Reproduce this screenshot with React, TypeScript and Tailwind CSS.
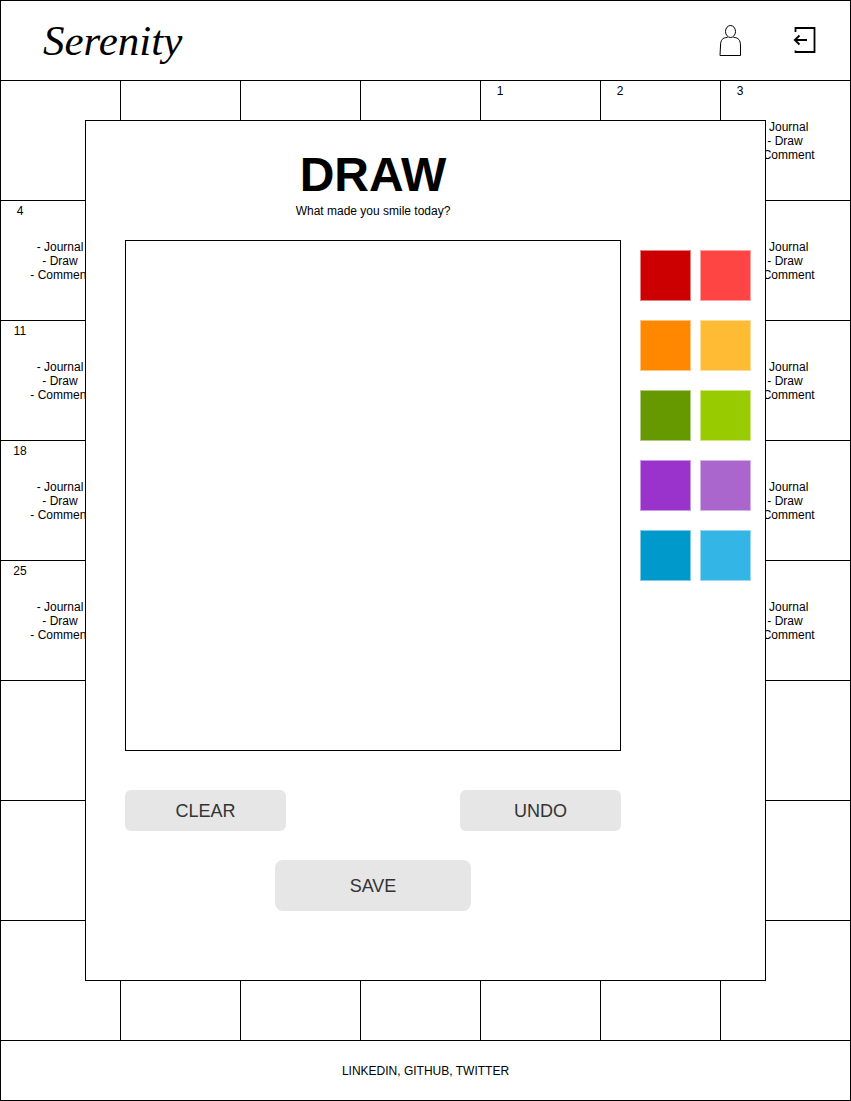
import React from "react";

type Day = { day?: number; entries?: boolean };

const weeks: Day[][] = [
  [{}, {}, {}, {}, { day: 1 }, { day: 2 }, { day: 3, entries: true }],
  ...[4, 11, 18, 25].map((day): Day[] => [{ day, entries: true }, {}, {}, {}, {}, {}, { entries: true }]),
  ...[0, 1, 2].map((): Day[] => [{}, {}, {}, {}, {}, {}, {}]),
];

const swatches = [
  { name: "Dark red", color: "bg-[#cc0000]" },
  { name: "Light red", color: "bg-[#ff4444]" },
  { name: "Dark orange", color: "bg-[#ff8800]" },
  { name: "Light orange", color: "bg-[#ffbb33]" },
  { name: "Dark green", color: "bg-[#669900]" },
  { name: "Light green", color: "bg-[#99cc00]" },
  { name: "Dark purple", color: "bg-[#9933cc]" },
  { name: "Light purple", color: "bg-[#aa66cc]" },
  { name: "Dark blue", color: "bg-[#0099cc]" },
  { name: "Light blue", color: "bg-[#33b5e5]" },
];

function Header() {
  return (
    <header className="flex h-20 items-center justify-between border-b border-black pr-8 pl-[42px]">
      <a href="#" className="font-['Liberation_Serif',serif] text-[43px] leading-none italic">
        Serenity
      </a>
      <nav className="flex items-center gap-[50px]">
        <button type="button" aria-label="Profile">
          <svg width="24" height="32" viewBox="0 0 24 32" fill="none" stroke="black" strokeWidth="1" className="block">
            <ellipse cx="12.5" cy="6.5" rx="5" ry="6" />
            <path d="M9.5 12.5C4.500 12.500 2.5 15 2.5 21L2 30.5H22.5L22.5 21C22.5 15 20.5 12.500 15.5 12.5" />
          </svg>
        </button>
        <button type="button" aria-label="Log out">
          <svg width="26" height="30" viewBox="0 0 26 30" fill="none" stroke="black" strokeWidth="1.8" className="block">
            <path d="M3.500 6V2H22.500V26H3.500V24.500M3 14H15M7.500 9.500L2.800 14L7.500 18.500" />
          </svg>
        </button>
      </nav>
    </header>
  );
}

function DayCell({ day, entries }: Day) {
  return (
    <div className="h-[120px] border-r border-b border-black nth-[7n]:border-r-0">
      <div className="flex h-5 w-[38px] items-center justify-center">{day}</div>
      {entries && (
        <ul className="flex h-20 flex-col items-center justify-center pr-px">
          <li>- Journal</li>
          <li>- Draw</li>
          <li>- Comment</li>
        </ul>
      )}
    </div>
  );
}

function ActionButton({ label, size }: { label: string; size: string }) {
  return (
    <button type="button" className={`bg-[#e6e6e6] text-lg text-[#333333] ${size}`}>
      {label}
    </button>
  );
}

function DrawDialog() {
  return (
    <section
      role="dialog"
      aria-labelledby="draw-title"
      className="z-10 col-start-1 row-start-1 mx-[84px] mt-[39px] mb-[60px] flex gap-[19px] border border-black bg-white pr-[14px] pl-[39px]"
    >
      <div className="flex flex-1 flex-col pt-[29px]">
        <h1 id="draw-title" className="text-center text-5xl leading-[50px] font-bold">
          DRAW
        </h1>
        <p className="text-center leading-[22px]">What made you smile today?</p>
        <canvas aria-label="Drawing area" className="mt-[18px] h-[511px] w-full border border-black" />
        <div className="mt-[39px] flex justify-between">
          <ActionButton label="CLEAR" size="h-[41px] w-[161px] rounded-md" />
          <ActionButton label="UNDO" size="h-[41px] w-[161px] rounded-md" />
        </div>
        <div className="mt-[29px] flex justify-center">
          <ActionButton label="SAVE" size="h-[51px] w-[196px] rounded-lg" />
        </div>
      </div>
      <div className="grid grid-cols-2 content-start gap-x-[9px] gap-y-[19px] pt-[129px]">
        {swatches.map(({ name, color }) => (
          <button key={name} type="button" aria-label={name} className={`size-[51px] border border-white/50 ${color}`} />
        ))}
      </div>
    </section>
  );
}

export default function App() {
  return (
    <div className="min-h-screen border border-black bg-white font-['Liberation_Sans',Arial,sans-serif] text-xs leading-[14px] text-black">
      <Header />
      <main className="grid">
        <div className="col-start-1 row-start-1 grid grid-cols-[repeat(6,120fr)_129fr]">
          {weeks.flat().map((cell, i) => (
            <DayCell key={i} {...cell} />
          ))}
        </div>
        <DrawDialog />
      </main>
      <footer className="flex h-[59px] items-center justify-center">LINKEDIN, GITHUB, TWITTER</footer>
    </div>
  );
}
